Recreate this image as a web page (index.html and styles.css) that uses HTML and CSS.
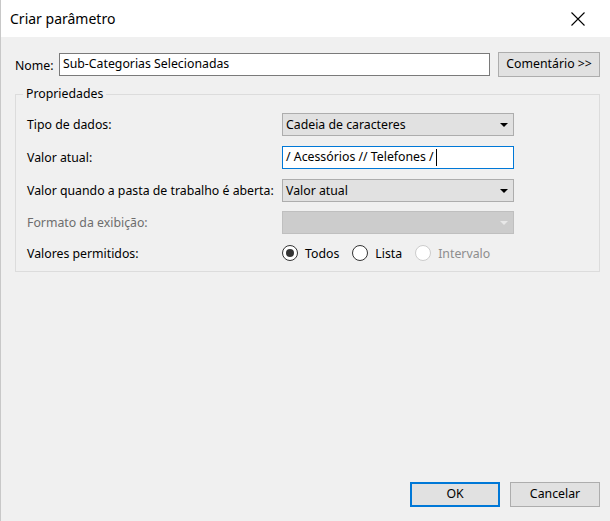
FILE: index.html
```html
<!DOCTYPE HTML>
<html lang="pt-BR">
<head>
    <meta charset="UTF-8">
    <title>Criar parâmetro</title>
    <link rel="stylesheet" href="styles.css">
</head>
<body>
    <div class="window">
        <div class="titlebar">
            <span class="title">Criar parâmetro</span>
            <span class="close">
                <svg width="14" height="14" viewBox="0 0 14 14"><path d="M0.5 0.5 L13.5 13.5 M13.5 0.5 L0.5 13.5" stroke="#000" stroke-width="1.1" fill="none"/></svg>
            </span>
        </div>
        <div class="content">
            <div class="name-row">
                <label class="name-label" for="nome">Nome:</label>
                <div class="textbox name-box" id="nome">Sub-Categorias Selecionadas</div>
                <div class="button comment">Comentário &gt;&gt;</div>
            </div>

            <div class="group">
                <div class="legend">Propriedades</div>
                <div class="rows">
                    <div class="label">Tipo de dados:</div>
                    <div class="combo"><span>Cadeia de caracteres</span><i class="arrow"></i></div>

                    <div class="label">Valor atual:</div>
                    <div class="textbox focus">/ Acessórios // Telefones /<span class="caret"></span></div>

                    <div class="label">Valor quando a pasta de trabalho é aberta:</div>
                    <div class="combo"><span>Valor atual</span><i class="arrow"></i></div>

                    <div class="label disabled">Formato da exibição:</div>
                    <div class="combo off"><span></span><i class="arrow"></i></div>

                    <div class="label radio-label">Valores permitidos:</div>
                    <div class="radios">
                        <span class="radio checked"><i></i>Todos</span>
                        <span class="radio"><i></i>Lista</span>
                        <span class="radio disabled"><i></i>Intervalo</span>
                    </div>
                </div>
            </div>

            <div class="footer">
                <div class="button default">OK</div>
                <div class="button">Cancelar</div>
            </div>
        </div>
    </div>
</body>
</html>
```

FILE: styles.css
```css
html, body {
    margin: 0;
    padding: 0;
}

body {
    font-family: "Noto Sans", "Open Sans", sans-serif;
    font-size: 12.3px;
    color: #000;
    background: #f0f0f0;
}

.window {
    width: 610px;
    height: 521px;
    display: flex;
    flex-direction: column;
    box-sizing: border-box;
    border-left: 1px solid #c8c8c8;
}

.titlebar {
    height: 37px;
    background: #fff;
    display: flex;
    align-items: center;
    padding: 0 25px 0 9px;
    flex: none;
}
.title {
    font-size: 14px;
    flex: 1;
    padding-bottom: 1px;
}
.close {
    display: flex;
}

.content {
    flex: 1;
    display: flex;
    flex-direction: column;
    padding: 15px 10px 14px 14px;
}

.name-row {
    display: flex;
    align-items: center;
    height: 25px;
}
.name-label {
    width: 44px;
    padding-top: 1px;
}
.textbox {
    box-sizing: border-box;
    height: 23px;
    background: #fff;
    border: 1px solid #7a7a7a;
    padding: 0 3px;
    line-height: 20px;
    white-space: nowrap;
}
.name-box {
    width: 432px;
    margin-right: 8px;
}
.textbox.focus {
    border-color: #0078d7;
}
.caret {
    display: inline-block;
    width: 1px;
    height: 17px;
    background: #000;
    vertical-align: middle;
    margin-left: 2px;
}

.button {
    box-sizing: border-box;
    background: #e1e1e1;
    border: 1px solid #adadad;
    text-align: center;
    height: 25px;
    line-height: 22px;
}
.comment {
    width: 102px;
}

.group {
    position: relative;
    margin-top: 17px;
    border: 1px solid #dcdcdc;
    height: 178px;
    box-sizing: border-box;
    padding: 18px 0 0 11px;
}
.legend {
    position: absolute;
    top: -9px;
    left: 7px;
    padding: 0 3px;
    background: #f0f0f0;
    line-height: 16px;
}

.rows {
    display: grid;
    grid-template-columns: 255px 232px;
    grid-auto-rows: 23px;
    row-gap: 10px;
    align-items: center;
}
.label.disabled {
    color: #6d6d6d;
    margin-top: -2px;
}
.rows .radio-label {
    margin-top: -7px;
}

.combo {
    box-sizing: border-box;
    height: 23px;
    background: #e1e1e1;
    border: 1px solid #adadad;
    display: flex;
    align-items: center;
    padding: 0 4px 0 3px;
}
.combo span {
    flex: 1;
}
.arrow {
    width: 0;
    height: 0;
    border-left: 4px solid transparent;
    border-right: 4px solid transparent;
    border-top: 4px solid #000;
    margin-right: 1px;
}
.combo.off {
    background: #cccccc;
    border-color: #bfbfbf;
    margin-top: -2px;
}
.combo.off .arrow {
    border-top-color: #e8e8e8;
}

.radios {
    display: flex;
    align-items: center;
    margin-top: -7px;
}
.radio {
    display: flex;
    align-items: center;
    margin-right: 13px;
}
.radio i {
    box-sizing: border-box;
    width: 16px;
    height: 16px;
    border: 1px solid #333;
    border-radius: 50%;
    background: #fff;
    margin-right: 7px;
    position: relative;
}
.radio.checked i::after {
    content: "";
    position: absolute;
    left: 3px;
    top: 3px;
    width: 8px;
    height: 8px;
    border-radius: 50%;
    background: #333;
}
.radio.disabled {
    color: #8d8d8d;
}
.radio.disabled i {
    border-color: #cccccc;
}

.footer {
    margin-top: auto;
    display: flex;
    justify-content: flex-end;
    gap: 10px;
}
.footer .button {
    width: 90px;
    height: 25px;
    line-height: 22px;
}
.footer .button.default {
    border: 2px solid #0078d7;
    line-height: 20px;
}
```
